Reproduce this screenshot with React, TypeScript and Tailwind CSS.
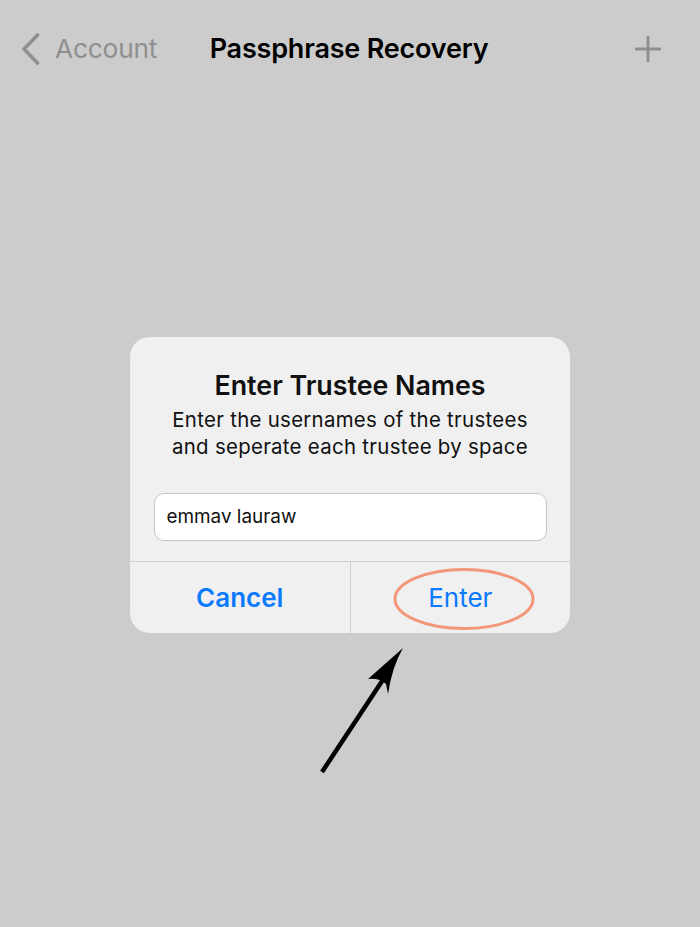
const font = { fontFamily: "Inter, 'Liberation Sans', sans-serif" };

export default function App() {
  return (
    <div className="min-h-[927px] w-[700px] bg-[#cccccc] flex flex-col" style={font}>
      <div className="h-[96px] grid grid-cols-[1fr_auto_1fr] items-center pl-[21px] pr-[39px] pt-[2px]">
        <div className="flex items-center gap-[15px]">
          <svg width="19" height="32" viewBox="0 0 19 32">
            <path d="M16.5 2 L3 16 L16.5 30" fill="none" stroke="#8f8f8f" strokeWidth="3.6" strokeLinecap="round" strokeLinejoin="round" />
          </svg>
          <span className="text-[26.3px] text-[#8f8f8f] tracking-[-0.2px]">Account</span>
        </div>
        <h1 className="text-[27px] font-semibold text-black tracking-[-0.2px] whitespace-nowrap ml-[16px]">Passphrase Recovery</h1>
        <div className="flex justify-end">
          <svg width="26" height="26" viewBox="0 0 26 26">
            <path d="M13 1 V25 M1 13 H25" stroke="#8f8f8f" strokeWidth="3" strokeLinecap="round" />
          </svg>
        </div>
      </div>

      <div className="relative flex justify-center mt-[241px]">
        <div className="w-[440px] bg-[#f0f0f0] rounded-[20px] overflow-hidden">
          <div className="flex flex-col items-center pt-[28px] px-[16px] pb-[20px]">
            <h2 className="text-[26.8px] font-semibold text-[#111] leading-[40px]">Enter Trustee Names</h2>
            <p className="text-[20.4px] text-[#111] leading-[27px] text-center tracking-[0.3px] mt-[1px]">
              Enter the usernames of the trustees
              <br />
              and seperate each trustee by space
            </p>
            <div className="mt-[33px] w-[393px] h-[48px] bg-white rounded-[10px] border border-[#c4c4c4] flex items-center px-[12px]">
              <span className="text-[18.9px] text-[#111]">emmav lauraw</span>
            </div>
          </div>
          <div className="flex border-t border-[#cfcfcf] h-[72px]">
            <button className="flex-1 flex items-center justify-center text-[26px] font-semibold text-[#0a7aff] pb-[1px]">
              Cancel
            </button>
            <div className="w-px bg-[#cfcfcf]" />
            <button className="relative flex-1 flex items-center justify-center text-[26px] text-[#0a7aff] pb-[1px]">
              Enter
              <svg className="absolute left-[42px] top-[5px]" width="142" height="64" viewBox="0 0 142 64">
                <ellipse cx="71" cy="32" rx="69" ry="29.5" fill="none" stroke="#f2977a" strokeWidth="3" />
              </svg>
            </button>
          </div>
        </div>

        <svg className="absolute left-[310px] top-[305px]" width="110" height="140" viewBox="310 640 110 140">
          <line x1="322" y1="770" x2="392" y2="664" stroke="#000" strokeWidth="4.5" />
          <path d="M403 646 L368 677 Q380 676 386 682 L388 692 Q392 665 403 646 Z" fill="#000" />
        </svg>
      </div>
    </div>
  );
}
